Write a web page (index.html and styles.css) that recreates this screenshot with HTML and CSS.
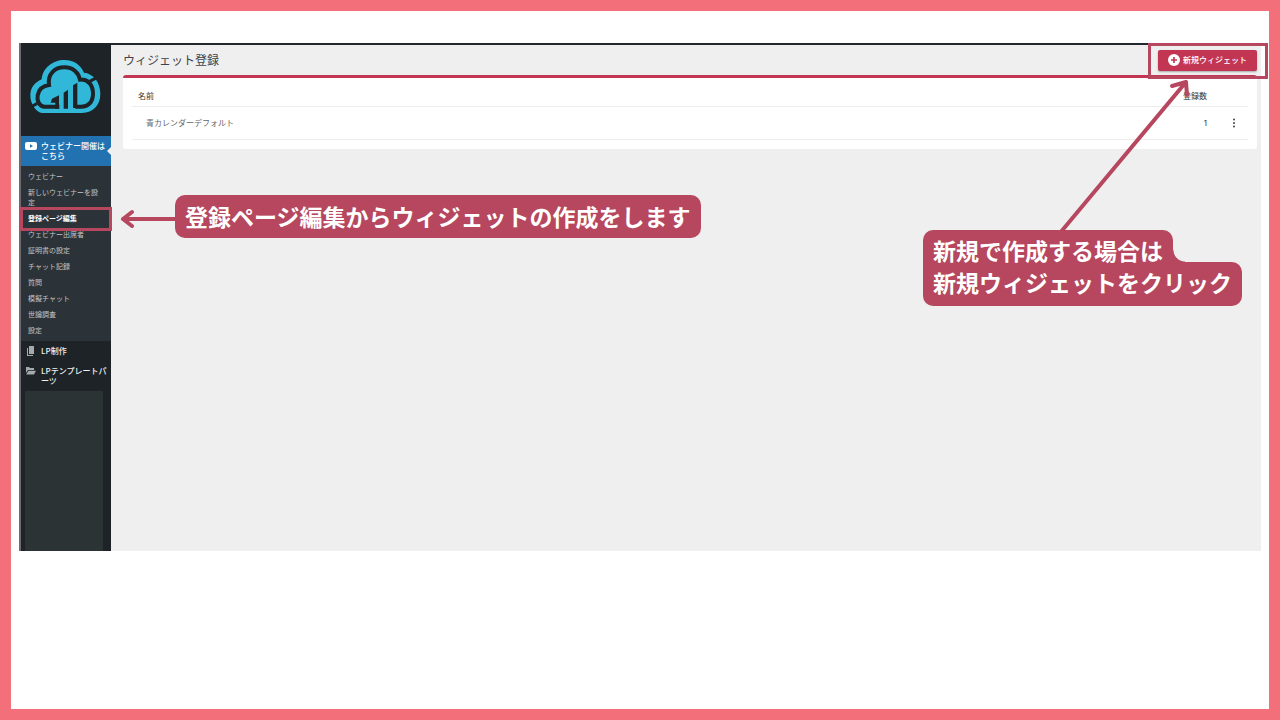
FILE: index.html
```html
<!DOCTYPE html>
<html lang="ja">
<head>
  <meta charset="UTF-8">
  <meta name="viewport" content="width=device-width, initial-scale=1.0">
  <title>ウィジェット登録</title>
  <link rel="stylesheet" href="styles.css">
</head>
<body>
  <div class="app">
    <nav class="sidebar">
      <a class="logo" href="#" aria-label="GID">
        <svg viewBox="0 0 276 240" aria-hidden="true">
          <path class="cyan" d="M66 189 C50 187 30 163 31 134 C32 112 45 97 65 88 C68 54 98 30 133 30 C163 30 182 46 192 68 C218 70 241 95 241 132 C241 164 220 189 186 189 Z"/>
          <path class="dark-line" d="M118 170 H72 C58 168 50 152 53 136 C56 118 68 108 87 105 C82 72 104 52 133 52 C160 52 176 69 180 89 C204 87 219 105 219 131 C219 156 204 170 184 170 H166"/>
          <path class="dark" d="M92 158 L96 146 L117 136 V176 H106 V158 Z M131 128 L144 119 V176 H131 Z M159 106 L172 98 V174 H159 Z"/>
          <path class="dark-cut" d="M202 98 L236 80 M32 171 L56 158"/>
        </svg>
      </a>

      <a class="menu-item current" href="#">
        <svg class="menu-icon" viewBox="0 0 12 10" aria-hidden="true"><rect y="1" width="12" height="8" rx="2" fill="#fff"/><path d="M5 3.2 8 5 5 6.8Z" fill="#2271b1"/></svg>
        <span>ウェビナー開催はこちら</span>
      </a>
      <ul class="submenu">
        <li><a href="#">ウェビナー</a></li>
        <li><a href="#">新しいウェビナーを設定</a></li>
        <li class="active"><a href="#">登録ページ編集</a></li>
        <li><a href="#">ウェビナー出席者</a></li>
        <li><a href="#">証明書の設定</a></li>
        <li><a href="#">チャット記録</a></li>
        <li><a href="#">質問</a></li>
        <li><a href="#">模擬チャット</a></li>
        <li><a href="#">世論調査</a></li>
        <li><a href="#">設定</a></li>
      </ul>
      <a class="menu-item" href="#">
        <svg class="menu-icon" viewBox="0 0 12 10" aria-hidden="true"><path d="M4 0H9V8H4Z M2 2H3V9H8V10H2Z" fill="#a7aaad"/></svg>
        <span>LP制作</span>
      </a>
      <a class="menu-item" href="#">
        <svg class="menu-icon" viewBox="0 0 12 10" aria-hidden="true"><path d="M1 1H4L5 2H9V4H3L1 7Z M3.5 4.8H11L9 8.5H1.2Z" fill="#a7aaad"/></svg>
        <span>LPテンプレートパーツ</span>
      </a>
      <div class="blank-panel"></div>
    </nav>

    <main class="content">
      <header class="page-head">
        <h1>ウィジェット登録</h1>
        <button class="new-btn" type="button">
          <svg viewBox="0 0 12 12" aria-hidden="true"><circle cx="6" cy="6" r="6" fill="#fff"/><path d="M6 3V9M3 6H9" stroke="#c23654" stroke-width="1.6"/></svg>
          新規ウィジェット
        </button>
      </header>
      <section class="card">
        <table>
          <thead>
            <tr><th>名前</th><th class="count">登録数</th><th class="actions"></th></tr>
          </thead>
          <tbody>
            <tr>
              <td class="name">青カレンダーデフォルト</td>
              <td class="count">1</td>
              <td class="actions">
                <button class="more-btn" type="button" aria-label="メニュー">
                  <svg viewBox="0 0 4 10" aria-hidden="true"><circle cx="2" cy="1.5" r="1"/><circle cx="2" cy="5" r="1"/><circle cx="2" cy="8.5" r="1"/></svg>
                </button>
              </td>
            </tr>
          </tbody>
        </table>
      </section>
    </main>

    <!-- guide notes over the screen -->
    <div class="note-menu">
      <svg class="arrow-left" viewBox="0 0 56 20" aria-hidden="true"><path d="M56 10H4M13 3 4 10 13 17"/></svg>
      <p class="bubble">登録ページ編集からウィジェットの作成をします</p>
    </div>
    <div class="frame-new"></div>
    <svg class="arrow-up" viewBox="0 0 140 160" aria-hidden="true"><path d="M7 156 133 5M119 9 133 5 134 18"/></svg>
    <div class="note-new">
      <p class="bubble line-top">新規で作成する場合は</p>
      <p class="bubble line-bottom">新規ウィジェットをクリック</p>
    </div>
  </div>
</body>
</html>
```
FILE: styles.css
```css
* { margin: 0; padding: 0; box-sizing: border-box; }

body {
  min-height: 100vh;
  padding: 32px 8px;
  border: 11px solid #f3707b;
  background: #fff;
  color: #3c434a;
  font-family: "Noto Sans CJK JP", sans-serif;
  font-size: 8px;
  line-height: 10px;
}

a { color: inherit; text-decoration: none; }
ul { list-style: none; }
svg { display: block; }

button {
  border: none;
  font: inherit;
  cursor: pointer;
}

.app {
  position: relative;
  display: flex;
  border-left: 2px solid #716970;
}

/* sidebar */
.sidebar {
  flex: 0 0 90px;
  min-width: 0;
  background: #1d2327;
  color: #f0f0f1;
}

.logo {
  display: block;
  padding: 7px 0 6px;
}

.logo svg {
  width: 92px;
  height: 80px;
  margin-left: -1px;
}

.cyan { fill: #31b8d9; }
.dark { fill: #1d2327; }
.dark-line { fill: none; stroke: #1d2327; stroke-width: 12; }
.dark-cut { fill: none; stroke: #1d2327; stroke-width: 9; }

.menu-item {
  position: relative;
  display: flex;
  gap: 4px;
  padding: 5px 4px;
  font-weight: 500;
}

.menu-item span { flex: 1; word-break: break-all; }

.menu-icon {
  flex: none;
  width: 12px;
  height: 10px;
}

.menu-item.current {
  background: #2271b1;
  color: #fff;
}

.menu-item.current::after {
  content: "";
  position: absolute;
  right: 0;
  top: 11px;
  border: 4px solid transparent;
  border-left: none;
  border-right-color: #efefef;
}

.submenu {
  padding: 2px 0 3px;
  background: #2c3338;
  color: #c3c4c7;
  font-size: 7px;
}

.submenu li { position: relative; }

.submenu a {
  display: block;
  padding: 3px 10px 3px 7px;
}

.submenu .active {
  color: #fff;
  font-weight: 700;
}

.submenu .active::after {
  content: "";
  position: absolute;
  inset: -3px -1px -5px;
  border: 3px solid #b6475e;
}

.blank-panel {
  height: 160px;
  margin: 0 8px 0 4px;
  background: #2c3335;
}

/* main area */
.content {
  flex: 1;
  padding: 0 4px 0 12px;
  border-top: 2px solid #23272e;
  background: #efefef;
}

.page-head {
  display: flex;
  align-items: center;
  justify-content: space-between;
  height: 30px;
}

h1 {
  font-size: 12px;
  font-weight: 400;
  line-height: 16px;
}

.new-btn {
  display: flex;
  align-items: center;
  gap: 3px;
  height: 21px;
  padding: 0 10px;
  border-radius: 2px;
  background: #c23654;
  box-shadow: 0 1px 2px rgba(0,0,0,0.3);
  color: #fff;
  font-weight: 500;
}

.new-btn svg {
  width: 12px;
  height: 12px;
}

.card {
  padding: 8px 9px 9px;
  border-top: 3px solid #c23654;
  border-radius: 3px;
  background: #fff;
}

table {
  width: 100%;
  border-collapse: collapse;
}

th, td {
  border-bottom: 1px solid #ededed;
  text-align: left;
}

th {
  height: 20px;
  padding: 0 6px;
  color: #333;
  font-weight: 400;
}

td {
  height: 33px;
  padding: 0 6px;
  color: #666;
}

td.name { padding-left: 14px; }

.count {
  width: 48px;
  text-align: right;
}

td.count {
  color: #333;
  font-family: Inter, sans-serif;
}

.actions { width: 35px; }

.more-btn {
  display: block;
  margin-left: auto;
  padding: 0 6px;
  background: none;
}

.more-btn svg {
  width: 4px;
  height: 10px;
  fill: #444;
}

/* notes */
.bubble {
  width: max-content;
  padding: 5px 10px 6px;
  border-radius: 10px;
  background: #b6475e;
  color: #fff;
  font-size: 23px;
  font-weight: 700;
  line-height: 32px;
}

.note-menu {
  position: absolute;
  left: 98px;
  top: 152px;
  display: flex;
  align-items: center;
}

.arrow-left {
  width: 56px;
  height: 20px;
  margin-top: 4px;
}

.arrow-left path,
.arrow-up path {
  fill: none;
  stroke: #b6475e;
  stroke-width: 4;
  stroke-linecap: round;
  stroke-linejoin: round;
}

.frame-new {
  position: absolute;
  right: -7px;
  top: 0;
  width: 120px;
  height: 36px;
  border: 3px solid #b6475e;
}

.arrow-up {
  position: absolute;
  right: 68px;
  top: 34px;
  width: 140px;
  height: 160px;
}

.note-new {
  position: absolute;
  right: 19px;
  top: 187px;
}

.line-top {
  position: relative;
  z-index: 1;
  height: 32px;
  padding-top: 4px;
  border-bottom-left-radius: 0;
  border-bottom-right-radius: 0;
}

/* inner corner where the short line meets the long one */
.line-top::after {
  content: "";
  position: absolute;
  left: 100%;
  bottom: 0;
  width: 12px;
  height: 12px;
  background: radial-gradient(circle at 100% 0, transparent 11px, #b6475e 12px);
}

.line-bottom {
  padding: 4px 10px 8px;
  border-top-left-radius: 0;
}
```
